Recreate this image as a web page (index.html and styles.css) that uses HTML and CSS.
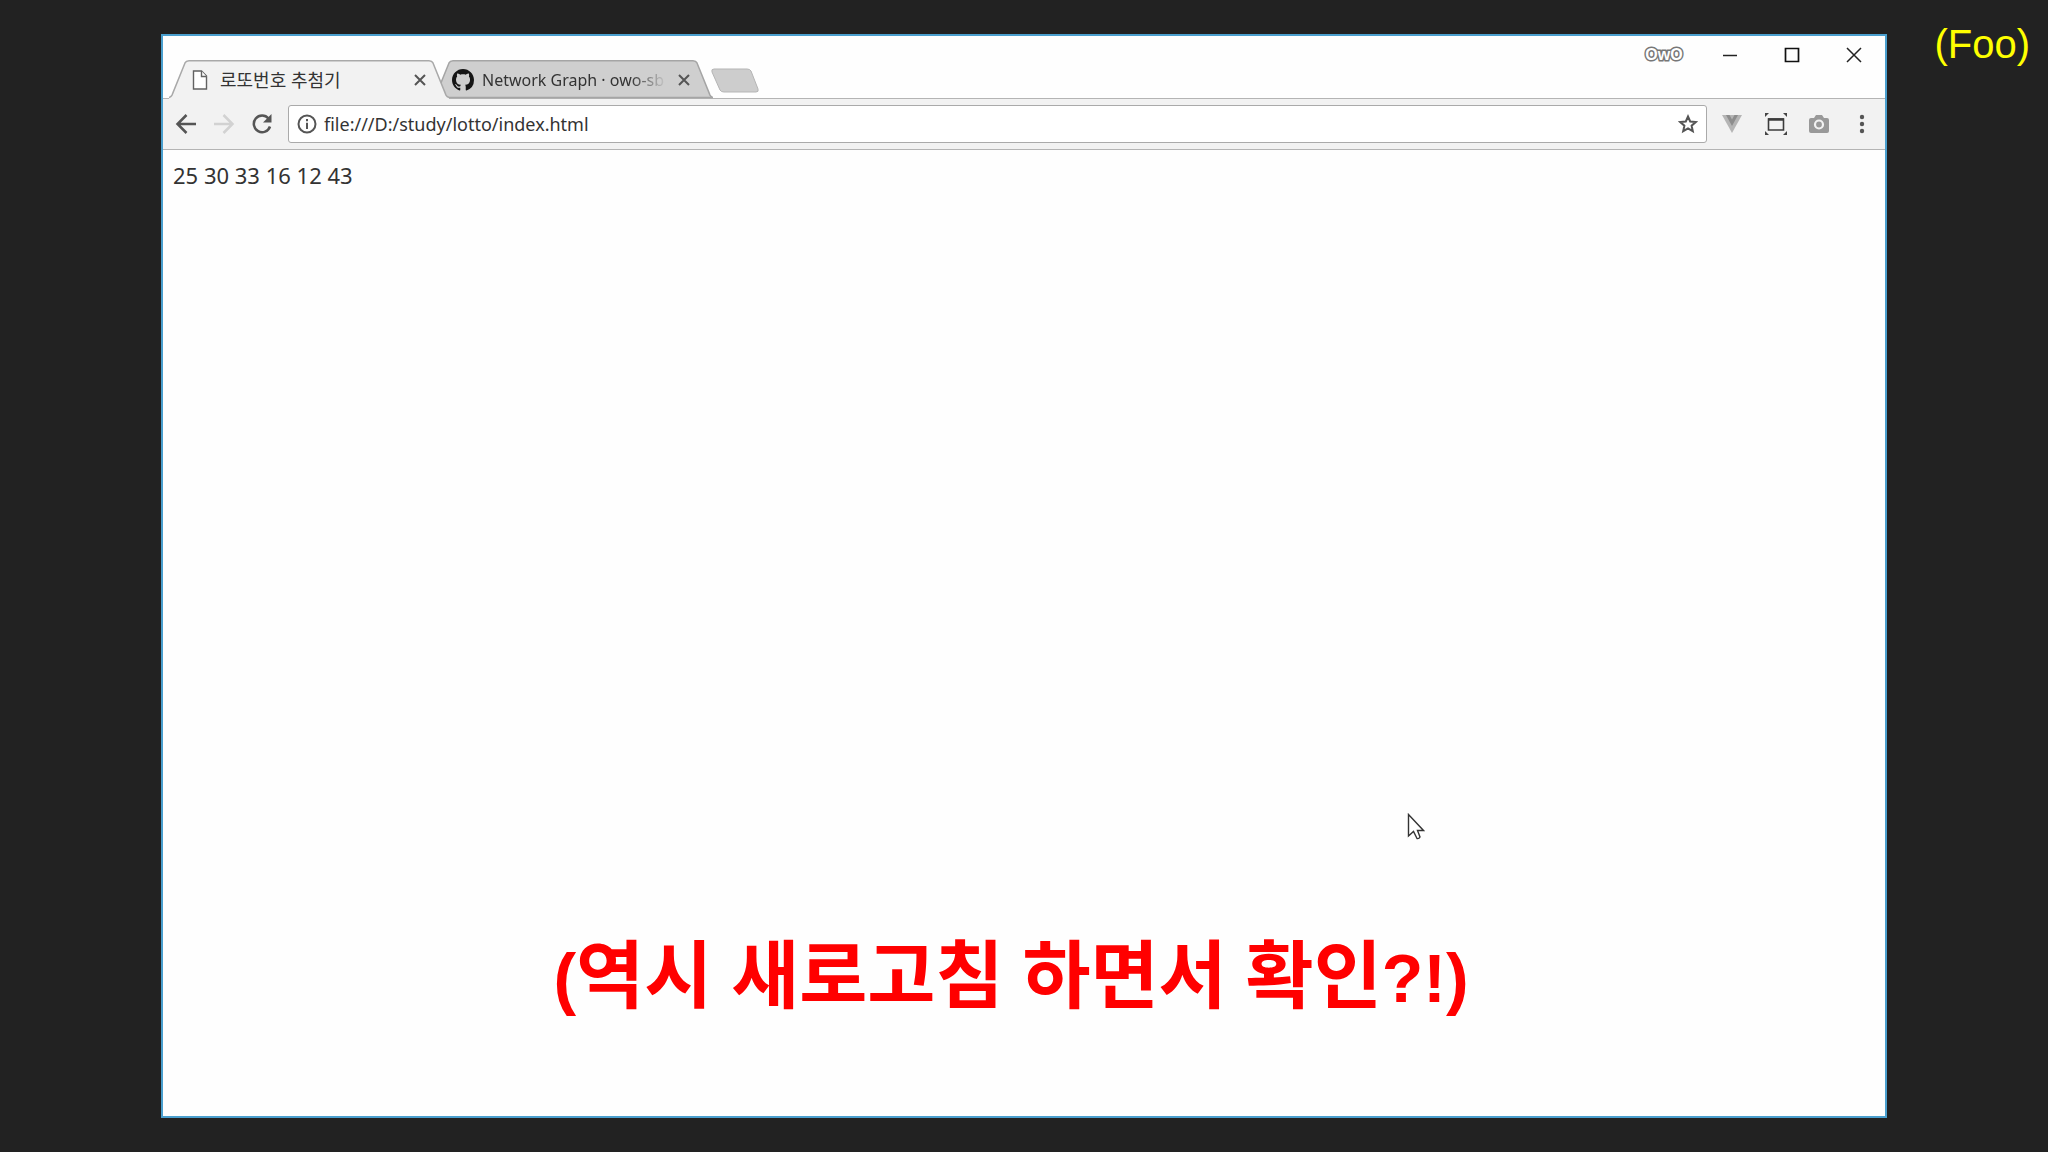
FILE: index.html
```html
<!DOCTYPE html>
<html lang="ko">
<head>
<meta charset="utf-8">
<title>로또번호 추첨기</title>
<link rel="stylesheet" href="styles.css">
</head>
<body>
<div class="window">
  <header class="titlebar">
    <nav class="tabs">
      <div class="tab active">
        <svg class="tab-shape" viewBox="0 0 280 40" preserveAspectRatio="none"><path fill="#f2f2f2" d="M0 40V38.5Q2 38 3 36L16 3Q17 .5 20 .5H260Q263 .5 264 3L277 36Q278 38 280 38.500V40Z"/><path fill="none" stroke="#a9a9a9" stroke-width="1.500" d="M0 38.500Q2 38 3 36L16 3Q17 .8 20 .8H260Q263 .8 264 3L277 36Q278 38 280 38.500"/></svg>
        <svg class="favicon" width="16" height="20" viewBox="0 0 16 20" fill="#fff" stroke="#626262" stroke-width="1.400"><path d="M1.500 1H9.500L14.500 6V19H1.500Z"/><path d="M9.500 1V6.500H14.500"/></svg>
        <a class="tab-title" href="#">로또번호 추첨기</a>
        <button class="tab-close" aria-label="탭 닫기"><svg width="14" height="14" viewBox="0 0 14 14" stroke="#555" stroke-width="2"><path d="M2 2L12 12M12 2L2 12"/></svg></button>
      </div>
      <div class="tab">
        <svg class="tab-shape" viewBox="0 0 280 40" preserveAspectRatio="none"><path fill="#cfcfcf" stroke="#a5a5a5" stroke-width="1.500" d="M0 38.500Q2 38 3 36L16 3Q17 .8 20 .8H260Q263 .8 264 3L277 36Q278 38 280 38.500Z"/></svg>
        <svg class="favicon github" width="22" height="22" viewBox="0 0 16 16" fill="#151515"><path d="M8 0C3.580 0 0 3.580 0 8c0 3.540 2.290 6.530 5.470 7.590.4.070.55-.17.55-.38 0-.19-.01-.82-.01-1.490-2.010.37-2.530-.49-2.690-.94-.09-.23-.48-.94-.82-1.130-.28-.15-.68-.52-.01-.53.63-.01 1.080.58 1.230.82.72 1.210 1.870.87 2.330.66.070-.52.28-.87.51-1.070-1.780-.2-3.640-.89-3.640-3.950 0-.87.31-1.590.82-2.150-.08-.2-.36-1.020.08-2.120 0 0 .67-.21 2.200.82.64-.18 1.320-.27 2-.27s1.360.09 2 .27c1.530-1.040 2.200-.82 2.200-.82.44 1.100.16 1.920.08 2.120.51.56.82 1.270.82 2.150 0 3.070-1.870 3.750-3.650 3.950.29.25.54.73.54 1.480 0 1.070-.01 1.930-.01 2.200 0 .21.15.46.55.38A8.010 8.010 0 0 0 16 8c0-4.420-3.580-8-8-8z"/></svg>
        <a class="tab-title fade" href="#">Network Graph · owo-sb</a>
        <button class="tab-close" aria-label="탭 닫기"><svg width="14" height="14" viewBox="0 0 14 14" stroke="#555" stroke-width="2"><path d="M2 2L12 12M12 2L2 12"/></svg></button>
      </div>
      <button class="new-tab" aria-label="새 탭"><svg width="48" height="26" viewBox="0 0 48 26"><path fill="#cdcdcd" stroke="#b5b5b5" d="M3 1H36Q39 1 40 3L47 21Q48 24 45 24H13Q10 24 9 22L1 4Q0 1 3 1Z"/></svg></button>
    </nav>
    <div class="controls">
      <button class="profile">OwO</button>
      <button class="control" aria-label="최소화"><svg width="16" height="16" viewBox="0 0 16 16"><path stroke="#222" stroke-width="1.500" d="M1 8.500H15"/></svg></button>
      <button class="control" aria-label="최대화"><svg width="16" height="16" viewBox="0 0 16 16"><path fill="none" stroke="#111" stroke-width="1.700" d="M1.500 1.500H14.500V14.500H1.500Z"/></svg></button>
      <button class="control" aria-label="닫기"><svg width="16" height="16" viewBox="0 0 16 16"><path stroke="#222" stroke-width="1.500" d="M1 1L15 15M15 1L1 15"/></svg></button>
    </div>
  </header>
  <div class="toolbar">
    <div class="nav">
      <button aria-label="뒤로"><svg width="22" height="22" viewBox="0 0 22 22" fill="none" stroke="#555" stroke-width="2.500"><path d="M21 11H3M11.500 2L2.500 11L11.500 20"/></svg></button>
      <button aria-label="앞으로"><svg width="22" height="22" viewBox="0 0 22 22" fill="none" stroke="#d2d2d2" stroke-width="2.500"><path d="M1 11H19M10.500 2L19.500 11L10.500 20"/></svg></button>
      <button aria-label="새로고침"><svg width="22" height="22" viewBox="0 0 22 22"><path fill="none" stroke="#555" stroke-width="2.500" d="M17.500 5.500A8.300 8.300 0 1 0 19 13.500"/><path fill="#555" d="M20.500 1V9.500H12Z"/></svg></button>
    </div>
    <div class="address">
      <svg width="20" height="20" viewBox="0 0 20 20" fill="none" stroke="#555" stroke-width="2"><circle cx="10" cy="10" r="8.500"/><path d="M10 8.800V15M10 5V7.200"/></svg>
      <input type="text" aria-label="주소" value="file:///D:/study/lotto/index.html">
      <button aria-label="북마크"><svg width="20" height="20" viewBox="0 0 20 20"><path fill="none" stroke="#555" stroke-width="2" d="M10 2.500L12.200 7.500L17.800 8L13.600 11.700L14.800 17.200L10 14.300L5.200 17.200L6.400 11.700L2.200 8L7.800 7.500Z"/></svg></button>
    </div>
    <div class="extensions">
      <button aria-label="Vue"><svg width="22" height="20" viewBox="0 0 22 20"><path fill="#b5b5b5" d="M1 1H21L11 19Z"/><path fill="#8d8d8d" d="M5 1H8.500L11 5.500L13.500 1H17L11 12Z"/></svg></button>
      <button aria-label="화면 크기"><svg width="22" height="22" viewBox="0 0 22 22"><path fill="none" stroke="#3c3c3c" stroke-width="1.600" d="M3.500 6H18.500V17H3.500Z"/><path stroke="#3c3c3c" stroke-width="2.500" d="M3 6.500H19"/><path fill="#444" d="M0 0H4L0 4ZM22 0H18L22 4ZM0 22H4L0 18ZM22 22H18L22 18Z"/></svg></button>
      <button aria-label="캡처"><svg width="20" height="20" viewBox="0 0 20 20"><path fill="#999" d="M2 4H5L7 1H13L15 4H18Q20 4 20 6V17Q20 19 18 19H2Q0 19 0 17V6Q0 4 2 4Z"/><circle cx="10" cy="10.500" r="4" fill="#999" stroke="#f2f2f2" stroke-width="2.200"/></svg></button>
      <button aria-label="메뉴"><svg width="6" height="20" viewBox="0 0 6 20" fill="#555"><circle cx="3" cy="3" r="2.200"/><circle cx="3" cy="10" r="2.200"/><circle cx="3" cy="17" r="2.200"/></svg></button>
    </div>
  </div>
  <main class="page">25 30 33 16 12 43</main>
</div>
<p class="caption">(<span>역시</span> <span>새로고침</span> <span>하면서</span> <span>확인</span>?!)</p>
<p class="note">(Foo)</p>
<svg class="cursor" width="18" height="28" viewBox="0 0 18 28"><path fill="#fff" stroke="#333" stroke-width="1.400" d="M1.500 1.500V23L6.500 18.500L10 25.500Q12 26 13 24L10.500 17.500H16.500Z"/></svg>
</body>
</html>
```
FILE: styles.css
```css
* { box-sizing: border-box; }
body {
  margin: 0;
  min-height: 100vh;
  padding: 34px 161px;
  display: flex;
  background: #222;
  color: #333;
  font-family: "Noto Sans", "Noto Sans CJK KR", sans-serif;
}
button { padding: 0; border: 0; background: none; font: inherit; display: flex; align-items: center; justify-content: center; }
svg { flex: none; }
.window { flex: 1; display: flex; flex-direction: column; background: #fefefe; border: 2px solid #4a9fce; }
.titlebar { display: flex; justify-content: space-between; height: 63px; border-bottom: 1px solid #b4b4b4; }
.tabs { display: flex; align-items: flex-end; padding-left: 6px; }
.tab {
  position: relative;
  display: flex;
  align-items: center;
  width: 280px;
  height: 39px;
  margin-bottom: -1px;
  padding: 0 18px 0 23px;
}
.tab + .tab { margin-left: -16px; padding-left: 19px; }
.tab.active { z-index: 1; }
.tab-shape { position: absolute; inset: 0; width: 100%; height: 100%; }
.tab > :not(.tab-shape) { position: relative; }
.tab-title {
  flex: 1;
  margin-left: 12px;
  white-space: nowrap;
  color: #333;
  font-size: 18px;
  line-height: 28px;
  text-decoration: none;
}
.tab + .tab .tab-title { margin-left: 8px; font-size: 16px; }
.fade { -webkit-mask-image: linear-gradient(to right, #000 80%, transparent); mask-image: linear-gradient(to right, #000 80%, transparent); }
.tab-close { width: 22px; height: 22px; margin-left: 6px; }
.new-tab { margin: 0 0 4px -2px; }
.controls { display: flex; height: 38px; }
.control { width: 62px; }
.profile {
  width: 70px;
  color: #fff;
  font: bold 16px "Liberation Sans", Arial, sans-serif;
  -webkit-text-stroke: 3px #777;
  paint-order: stroke fill;
}
.toolbar { display: flex; align-items: center; height: 51px; padding: 0 20px 0 12px; background: #f2f2f2; border-bottom: 1px solid #b4b4b4; }
.nav { display: flex; gap: 16px; margin-right: 15px; }
.address { flex: 1; display: flex; align-items: center; height: 38px; padding: 0 8px; background: #fff; border: 1px solid #aaa; border-radius: 3px; }
.address input { flex: 1; min-width: 0; margin-left: 7px; padding: 0; border: 0; outline: 0; background: none; color: #333; font: 18px/26px "Noto Sans", sans-serif; }
.extensions { display: flex; align-items: center; gap: 22px; margin-left: 14px; }
.extensions button:last-child { margin-left: 8px; }
.page { flex: 1; padding: 9px 10px; font-size: 22px; line-height: 32px; }
.caption {
  position: absolute;
  inset: auto 26px 129px 0;
  margin: 0;
  color: #f00;
  font: bold 68px/90px "Liberation Sans", Arial, sans-serif;
  text-align: center;
}
.caption span { font-family: "Noto Sans CJK KR", sans-serif; font-size: 74px; line-height: 1; }
.note { position: absolute; top: 21px; right: 18px; margin: 0; color: #ff0; font: 40px/46px "Liberation Sans", Arial, sans-serif; }
.cursor { position: absolute; left: 1407px; top: 813px; }
```
